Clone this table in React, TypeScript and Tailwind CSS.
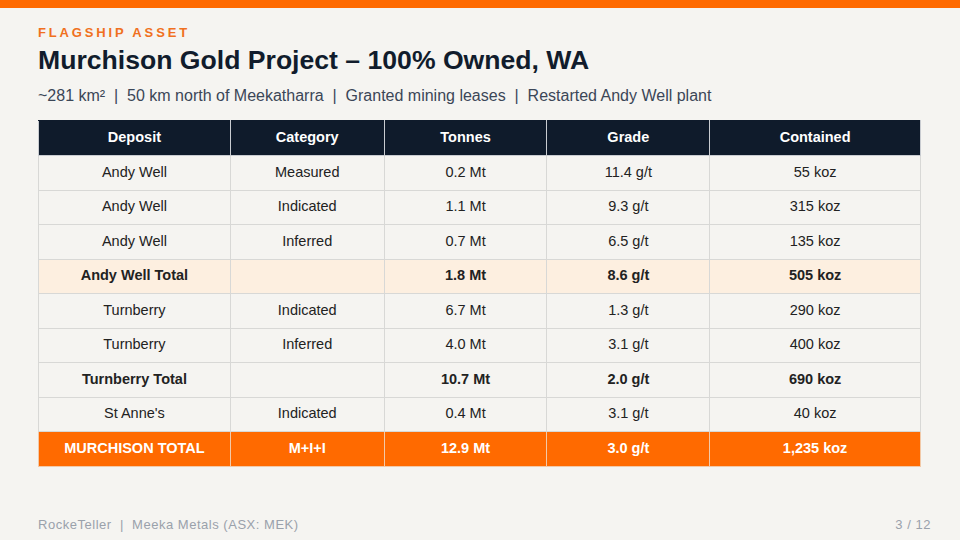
const ROWS: Array<{ cells: string[]; kind?: 'sub' | 'subPlain' | 'total' }> = [
  { cells: ['Andy Well', 'Measured', '0.2 Mt', '11.4 g/t', '55 koz'] },
  { cells: ['Andy Well', 'Indicated', '1.1 Mt', '9.3 g/t', '315 koz'] },
  { cells: ['Andy Well', 'Inferred', '0.7 Mt', '6.5 g/t', '135 koz'] },
  { cells: ['Andy Well Total', '', '1.8 Mt', '8.6 g/t', '505 koz'], kind: 'sub' },
  { cells: ['Turnberry', 'Indicated', '6.7 Mt', '1.3 g/t', '290 koz'] },
  { cells: ['Turnberry', 'Inferred', '4.0 Mt', '3.1 g/t', '400 koz'] },
  { cells: ['Turnberry Total', '', '10.7 Mt', '2.0 g/t', '690 koz'], kind: 'subPlain' },
  { cells: ["St Anne's", 'Indicated', '0.4 Mt', '3.1 g/t', '40 koz'] },
  { cells: ['MURCHISON TOTAL', 'M+I+I', '12.9 Mt', '3.0 g/t', '1,235 koz'], kind: 'total' },
]

const HEADERS = ['Deposit', 'Category', 'Tonnes', 'Grade', 'Contained']
const WIDTHS = ['w-[192px]', 'w-[154px]', 'w-[163px]', 'w-[163px]', 'w-[211px]']

export default function App() {
  return (
    <div className="w-[960px] h-[540px] bg-[#f5f4f1] flex flex-col font-['Liberation_Sans',Arial,sans-serif] overflow-hidden">
      <div className="h-[8px] bg-[#ff6a00] shrink-0" />

      <div className="flex-1 flex flex-col px-[38px] pt-[18px]">
        <p className="text-[13px] leading-[14px] font-bold tracking-[0.22em] text-[#f07020]">
          FLAGSHIP ASSET
        </p>
        <h1 className="mt-[5px] text-[26.6px] leading-[31px] font-bold text-[#111c2c]">
          Murchison Gold Project – 100% Owned, WA
        </h1>
        <p className="mt-[11px] text-[16px] leading-[18px] text-[#3b4657]">
          ~281 km²&nbsp; |&nbsp; 50 km north of Meekatharra&nbsp; |&nbsp; Granted mining leases&nbsp; |&nbsp; Restarted Andy Well plant
        </p>

        <table className="mt-[15px] w-[883px] border-collapse text-[14.5px] text-[#222]">
          <thead>
            <tr className="h-[35px] bg-[#0f1b2b] text-white">
              {HEADERS.map((h, i) => (
                <th
                  key={h}
                  className={`${WIDTHS[i]} font-bold text-center border border-[#c9ccd1] border-t-[#0f1b2b]`}
                >
                  {h}
                </th>
              ))}
            </tr>
          </thead>
          <tbody>
            {ROWS.map((row, r) => {
              const rowCls =
                row.kind === 'sub'
                  ? 'bg-[#fdefe0] font-bold'
                  : row.kind === 'subPlain'
                    ? 'font-bold'
                    : row.kind === 'total'
                      ? 'bg-[#ff6a00] text-white font-bold'
                      : ''
              return (
                <tr key={r} className={`h-[34.5px] ${rowCls}`}>
                  {row.cells.map((c, i) => (
                    <td
                      key={i}
                      className={`text-center border ${
                        row.kind === 'total' ? 'border-[#f2c9a8]' : 'border-[#d8d8d6]'
                      }`}
                    >
                      {c}
                    </td>
                  ))}
                </tr>
              )
            })}
          </tbody>
        </table>

        <div className="mt-auto mb-[6px] flex items-center justify-between text-[13px] tracking-[0.04em] text-[#9aa1ab]">
          <span>RockeTeller&nbsp; |&nbsp; Meeka Metals (ASX: MEK)</span>
          <span className="mr-[-9px]">3 / 12</span>
        </div>
      </div>
    </div>
  )
}
